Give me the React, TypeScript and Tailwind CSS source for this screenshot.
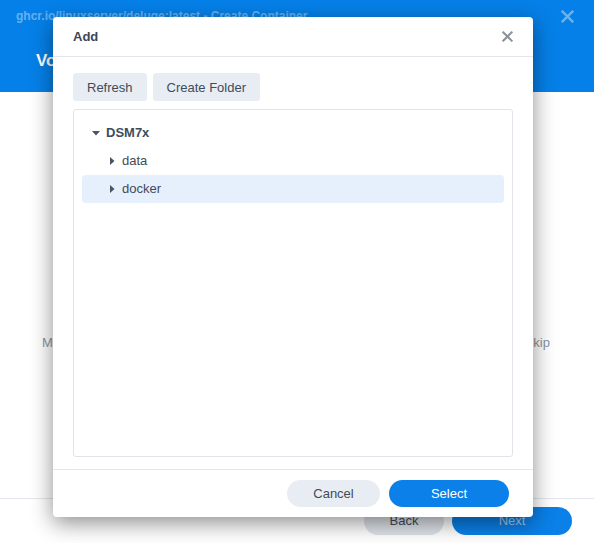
import { FC } from "react";

const font = { fontFamily: '"Liberation Sans", Arial, sans-serif' };

// ---------------- Small glyphs ----------------
const Caret: FC<{ open?: boolean }> = ({ open }) => (
  <svg width="8" height="8" viewBox="0 0 8 8" className="shrink-0">
    {open ? (
      <polygon points="0,2 8,2 4,6.5" fill="#4a5563" />
    ) : (
      <polygon points="2,0 6.5,4 2,8" fill="#4a5563" />
    )}
  </svg>
);

const CloseX: FC<{ color: string; size?: number }> = ({ color, size = 12 }) => (
  <svg width={size} height={size} viewBox="0 0 12 12">
    <path d="M1.5 1.5 L10.5 10.5 M10.5 1.5 L1.5 10.5" stroke={color} strokeWidth="2.2" strokeLinecap="square" />
  </svg>
);

// ---------------- Tree row ----------------
type RowProps = { label: string; depth: number; open?: boolean; bold?: boolean; selected?: boolean };

const TreeRow: FC<RowProps> = ({ label, depth, open, bold, selected }) => (
  <div
    className={`flex h-7 items-center gap-[6px] rounded-[4px] text-[13px] text-[#414b58] ${
      selected ? "bg-[#e5f0fc]" : ""
    } ${depth === 0 ? "pl-[10px]" : "pl-[26px]"} ${bold ? "font-bold" : ""}`}
  >
    <Caret open={open} />
    <span>{label}</span>
  </div>
);

// ---------------- Add dialog ----------------
const AddDialog = () => (
  <div className="absolute left-[53px] top-[17px] flex h-[500px] w-[480px] flex-col rounded-[4px] bg-white shadow-[0_6px_22px_rgba(0,0,0,0.45)]">
    <div className="flex h-[40px] shrink-0 items-center justify-between border-b border-[#e3e7ec] px-5">
      <span className="text-[13px] font-bold text-[#3d4754]">Add</span>
      <CloseX color="#8b9099" size={11} />
    </div>

    <div className="flex flex-1 flex-col px-5 pt-4">
      <div className="flex gap-[6px]">
        <button className="h-[28px] rounded-[3px] bg-[#e8edf3] px-[14px] pt-[1px] text-[13px] text-[#414b58]">
          Refresh
        </button>
        <button className="h-[28px] rounded-[3px] bg-[#e8edf3] px-[14px] pt-[1px] text-[13px] text-[#414b58]">
          Create Folder
        </button>
      </div>

      <div className="mt-[8px] h-[348px] rounded-[3px] border border-[#e1e5ea] px-2 pt-[9px]">
        <TreeRow label="DSM7x" depth={0} open bold />
        <TreeRow label="data" depth={1} />
        <TreeRow label="docker" depth={1} selected />
      </div>
    </div>

    <div className="flex h-[48px] shrink-0 items-start justify-end gap-[9px] border-t border-[#e3e7ec] pr-6 pt-[10px]">
      <button className="h-[27px] w-[93px] rounded-full bg-[#e8edf3] text-[13px] text-[#414b58]">Cancel</button>
      <button className="h-[27px] w-[120px] rounded-full bg-[#0a80e8] text-[13px] text-white">Select</button>
    </div>
  </div>
);

export default function App() {
  return (
    <div className="relative h-[543px] w-[594px] overflow-hidden bg-white" style={font}>
      {/* window header */}
      <div className="h-[92px] bg-[#0580e8] px-4">
        <div className="flex h-[32px] items-center justify-between">
          <span className="text-[12px] font-bold text-white/40">
            ghcr.io/linuxserver/deluge:latest - Create Container
          </span>
          <span className="pr-[4px] opacity-40">
            <CloseX color="#ffffff" size={13} />
          </span>
        </div>
        <div className="pl-5 pt-[16px] text-[17px] font-bold text-white">Volume Settings</div>
      </div>

      {/* page body behind the dialog */}
      <div className="flex h-[406px] items-center justify-between pl-[42px] pr-[44px] pt-[96px] text-[13px] text-[#8a95a3]">
        <span>Mount a folder or a file to the container.</span>
        <span>Click Next to skip</span>
      </div>

      <div className="flex h-[45px] items-center justify-end gap-2 border-t border-[#e4e8ec] pr-[22px]">
        <button className="h-[28px] w-[80px] rounded-full bg-[#dfe4ea] text-[13px] text-[#414b58]">Back</button>
        <button className="h-[28px] w-[120px] rounded-full bg-[#0a80e8] text-[13px] text-[#a9cbee]">Next</button>
      </div>

      <AddDialog />
    </div>
  );
}
